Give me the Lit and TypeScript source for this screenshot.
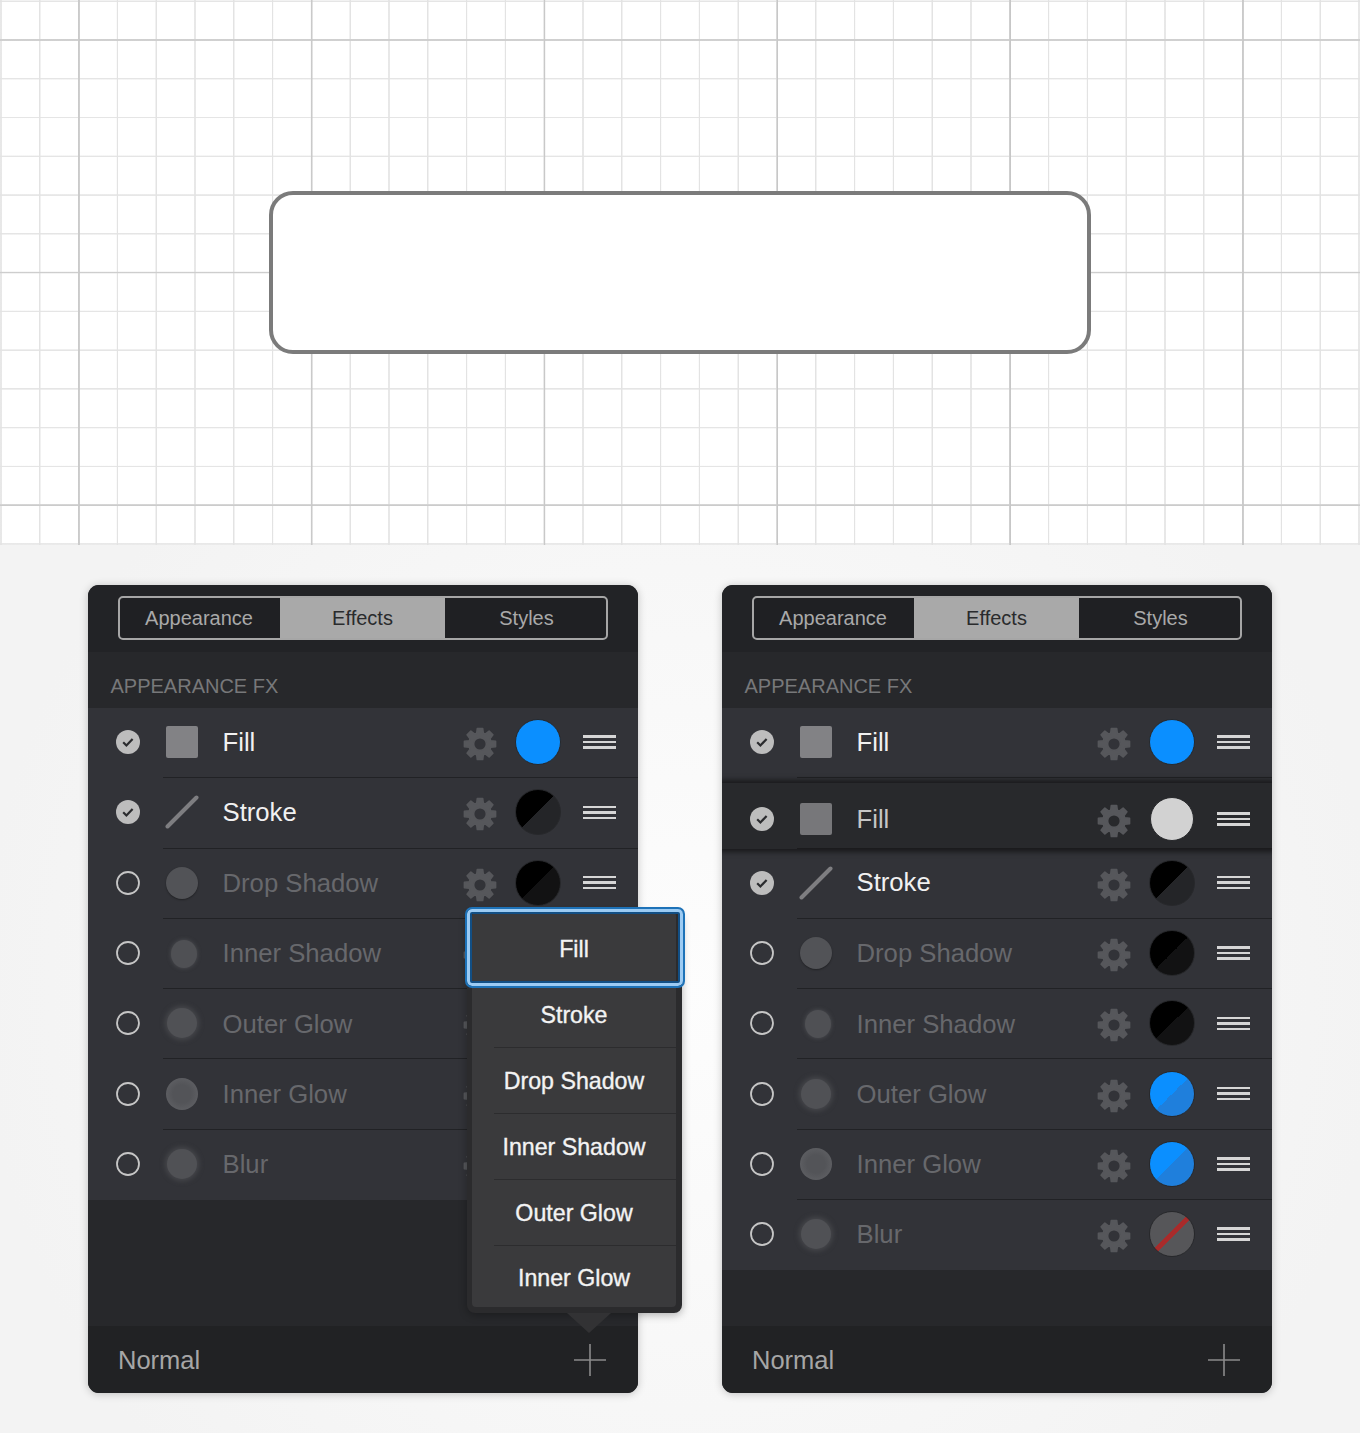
import { LitElement, html, css, svg } from 'lit';
import { customElement } from 'lit/decorators.js';

type Fx = { name: string; icon: string; on: boolean; swatch: string };

const LEFT_ROWS: Fx[] = [
  { name: 'Fill', icon: 'square', on: true, swatch: 'blue' },
  { name: 'Stroke', icon: 'line', on: true, swatch: 'half-a' },
  { name: 'Drop Shadow', icon: 'drop', on: false, swatch: 'half-b' },
  { name: 'Inner Shadow', icon: 'inner', on: false, swatch: 'half-b' },
  { name: 'Outer Glow', icon: 'outer', on: false, swatch: 'half-b' },
  { name: 'Inner Glow', icon: 'iglow', on: false, swatch: 'half-b' },
  { name: 'Blur', icon: 'blur', on: false, swatch: 'half-b' },
];

const RIGHT_ROWS: Fx[] = [
  { name: 'Fill', icon: 'square', on: true, swatch: 'blue' },
  { name: 'Stroke', icon: 'line', on: true, swatch: 'half-a' },
  { name: 'Drop Shadow', icon: 'drop', on: false, swatch: 'half-b' },
  { name: 'Inner Shadow', icon: 'inner', on: false, swatch: 'half-b' },
  { name: 'Outer Glow', icon: 'outer', on: false, swatch: 'half-blue' },
  { name: 'Inner Glow', icon: 'iglow', on: false, swatch: 'half-blue' },
  { name: 'Blur', icon: 'blur', on: false, swatch: 'none' },
];

const MENU = ['Stroke', 'Drop Shadow', 'Inner Shadow', 'Outer Glow', 'Inner Glow'];

// 8 toothed gear, built once
function gearPath() {
  const outer = 15.8, root = 11.2, hole = 6.4, c = 17;
  const pts: string[] = [];
  for (let i = 0; i < 8; i++) {
    const a = (i * Math.PI) / 4 - Math.PI / 2;
    const at = (r: number, d: number) =>
      `${(c + r * Math.cos(a + d)).toFixed(2)} ${(c + r * Math.sin(a + d)).toFixed(2)}`;
    pts.push(at(root, -0.3), at(outer, -0.17), at(outer, 0.17), at(root, 0.3));
  }
  const ring = `M${c - hole} ${c}a${hole} ${hole} 0 1 0 ${hole * 2} 0a${hole} ${hole} 0 1 0 ${-hole * 2} 0Z`;
  return `M${pts.join('L')}Z${ring}`;
}
const GEAR = gearPath();

@customElement('app-root')
export class AppRoot extends LitElement {
  static styles = css`
    :host {
      display: block;
      width: 1360px;
      height: 1433px;
      font-family: 'Liberation Sans', Arial, sans-serif;
      overflow: hidden;
    }

    /* Canvas */
    .canvas {
      height: 545px;
      box-sizing: border-box;
      display: flex;
      align-items: flex-start;
      justify-content: flex-start;
      padding: 191px 0 0 269px;
      background-color: #fff;
      background-image:
        repeating-linear-gradient(90deg, transparent 0, transparent 77.8px, #cbcbcb 78.4px, #c6c6c6 79.4px, transparent 80px, transparent 232.8px),
        repeating-linear-gradient(180deg, transparent 0, transparent 38.8px, #d0d0d0 39.4px, #cbcbcb 40.4px, transparent 41px, transparent 232.6px),
        repeating-linear-gradient(90deg, transparent 0, transparent 0px, #e3e3e3 0.6px, #e3e3e3 1.4px, transparent 2px, transparent 38.8px),
        repeating-linear-gradient(180deg, transparent 0, transparent 0.2px, #e5e5e5 0.8px, #e5e5e5 1.6px, transparent 2.2px, transparent 38.77px);
    }

    .shape {
      width: 822px;
      height: 163px;
      box-sizing: border-box;
      border: 4px solid #7b7b7b;
      border-radius: 24px;
      background: #fff;
    }

    /* Panels */
    .stage {
      height: 888px;
      box-sizing: border-box;
      padding: 40px 88px;
      display: flex;
      justify-content: space-between;
      background: radial-gradient(ellipse 700px 700px at 50% 50%, #fdfdfd 0%, #f3f3f3 100%);
    }

    .panel {
      position: relative;
      width: 550px;
      height: 808px;
      display: flex;
      flex-direction: column;
      border-radius: 11px;
      background: #27282b;
      box-shadow: 0 1px 8px rgba(0, 0, 0, 0.22);
    }

    .head {
      height: 67px;
      box-sizing: border-box;
      padding: 11px 30px 0;
      background: #222326;
      border-radius: 11px 11px 0 0;
    }

    .tabs {
      display: flex;
      height: 44px;
      width: 490px;
      box-sizing: border-box;
      border: 2px solid #a6a6a6;
      border-radius: 5px;
      background: #1f2023;
      overflow: hidden;
    }

    .tab {
      flex: 1;
      display: flex;
      align-items: center;
      justify-content: center;
      padding-left: 2px;
      font-size: 20px;
      color: #a9a9a9;
    }

    .tab.first {
      flex: none;
      width: 158px;
      padding: 0 2px 0 0;
    }

    .tab.sel {
      flex: none;
      width: 165px;
      padding: 0;
      background: #a9a9a9;
      color: #2a2b2d;
    }

    .title {
      height: 56px;
      box-sizing: border-box;
      padding: 22px 0 0 22.5px;
      font-size: 20px;
      line-height: 24px;
      color: #77787a;
    }

    .rows {
      background: #323338;
    }

    .row {
      position: relative;
      height: 70.3px;
      box-sizing: border-box;
      padding: 0 22px 2px 0;
      display: flex;
      align-items: center;
      background: linear-gradient(#212225, #212225) no-repeat 75px 100% / 100% 1px;
    }

    .row:last-child {
      background: none;
    }

    .row.ghost {
      position: absolute;
      left: 0;
      right: 0;
      top: 198px;
      height: 66px;
      padding: 6px 22px 0 0;
      background: linear-gradient(#1b1b1d, #1b1b1d) no-repeat 75px 100% / 100% 1px, #28292c;
      box-shadow: 0 0 5px 3px rgba(0, 0, 0, 0.5);
      clip-path: inset(-10px 0);
      z-index: 1;
    }

    .check {
      width: 24px;
      height: 24px;
      margin: 0 25px 0 28px;
      flex: none;
      display: block;
    }

    .ico {
      width: 34px;
      height: 34px;
      margin-right: 23.5px;
      flex: none;
      display: flex;
      align-items: center;
      justify-content: center;
    }

    .square {
      width: 32px;
      height: 32px;
      border-radius: 2px;
      background: #828285;
    }

    .ghost .square {
      background: #77777a;
    }

    .dot {
      width: 32px;
      height: 32px;
      border-radius: 50%;
      background: #525357;
    }

    .dot.drop {
      box-shadow: 0 1px 2px rgba(0, 0, 0, 0.35);
    }

    .dot.inner {
      width: 26px;
      height: 28px;
      margin: 2px 0 0 4px;
      background: #4f5054;
      box-shadow: 0 0 4px #4f5054;
    }

    .dot.outer,
    .dot.blur {
      width: 30px;
      height: 30px;
      background: #505155;
      box-shadow: 0 0 5px 2px #46474b;
    }

    .dot.iglow {
      background: radial-gradient(circle, #535458 40%, #65666a 100%);
    }

    .name {
      flex: 1;
      font-size: 25.7px;
      color: #f1f1f1;
    }

    .row.off .name {
      padding-top: 1.5px;
      color: #67686c;
    }

    .ghost .name {
      color: #c6c6c6;
    }

    .gear {
      width: 34px;
      height: 34px;
      flex: none;
      margin: 4px 18px 0 0;
      fill: #56575b;
      stroke: #56575b;
      stroke-width: 1.6;
      stroke-linejoin: round;
      fill-rule: evenodd;
    }

    .swatch {
      width: 46px;
      height: 46px;
      box-sizing: border-box;
      border-radius: 50%;
      flex: none;
      margin-right: 22px;
      border: 1px solid #27282b;
    }

    .swatch.blue {
      background: #0b8fff;
    }

    .swatch.half-a {
      background: linear-gradient(135deg, #000 50%, #242528 50%);
    }

    .swatch.half-b {
      background: linear-gradient(135deg, #000 50%, #121213 50%);
    }

    .swatch.half-blue {
      background: linear-gradient(135deg, #0b8fff 50%, #1f7fdc 50%);
    }

    .swatch.none {
      background: linear-gradient(135deg, #565659 46%, #a82b2b 46%, #a82b2b 54%, #565659 54%);
    }

    .swatch.light {
      width: 44px;
      height: 44px;
      margin: 0 23px 0 1px;
      background: #d2d2d2;
    }

    .grip {
      width: 33px;
      flex: none;
      display: flex;
      flex-direction: column;
      gap: 3px;
    }

    .grip span {
      height: 2.5px;
      background: #d6d6d6;
    }

    .spacer {
      flex: 1;
    }

    .foot {
      height: 67px;
      box-sizing: border-box;
      display: flex;
      align-items: center;
      justify-content: space-between;
      padding: 2px 32px 0 30px;
      background: #212224;
      border-radius: 0 0 11px 11px;
      font-size: 25.5px;
      color: #a6a6a6;
    }

    .plus {
      width: 32px;
      height: 32px;
      margin-top: -2px;
      stroke: #8b8b8b;
      stroke-width: 1.6;
    }

    /* Popup menu */
    .popup {
      position: absolute;
      left: 379px;
      top: 327px;
      width: 215px;
      box-sizing: border-box;
      padding: 0 6px 6px 5px;
      border-radius: 8px;
      background: #2b2b2d;
      box-shadow: 0 2px 8px rgba(0, 0, 0, 0.3);
      z-index: 2;
    }

    .popup::after {
      content: '';
      position: absolute;
      left: 100px;
      bottom: -20px;
      border-left: 22px solid transparent;
      border-right: 22px solid transparent;
      border-top: 20px solid #323234;
    }

    .list {
      background: #3a3a3c;
      border-radius: 4px;
    }

    .item {
      height: 66px;
      display: flex;
      align-items: center;
      justify-content: center;
      font-size: 23.2px;
      color: #f3f3f3;
      -webkit-text-stroke: 0.35px #f3f3f3;
      background: linear-gradient(#2c2c2e, #2c2c2e) no-repeat 22px 100% / 100% 1px;
    }

    .item:last-child {
      height: 61px;
      padding-top: 3px;
      box-sizing: border-box;
      background: none;
    }

    .item.active {
      position: relative;
      height: 70px;
      padding-top: 4px;
      box-sizing: border-box;
      background: none;
    }

    .ring {
      position: absolute;
      left: -7px;
      top: -5px;
      width: 220px;
      height: 81px;
      box-sizing: border-box;
      border: 2px solid #1d72b8;
      border-radius: 7px;
      box-shadow: inset 0 0 0 3px #9ccbf3, inset 0 0 0 5px #124f85;
      z-index: 0;
    }

    .item.active b {
      position: relative;
      font-weight: normal;
    }
  `;

  private renderIcon(kind: string) {
    if (kind === 'square') return html`<div class="square"></div>`;
    if (kind === 'line') {
      return html`<svg width="34" height="34" viewBox="0 0 34 34" fill="none" stroke="#7e7e81" stroke-width="4" stroke-linecap="round">
        <line x1="2.5" y1="31.5" x2="31.5" y2="2.5"></line>
      </svg>`;
    }
    return html`<div class="dot ${kind}"></div>`;
  }

  private renderCheck(on: boolean) {
    if (!on) {
      return html`<svg class="check" viewBox="0 0 24 24"><circle cx="12" cy="12" r="11" fill="none" stroke="#c6c6c6" stroke-width="1.8"></circle></svg>`;
    }
    return html`<svg class="check" viewBox="0 0 24 24">
      <circle cx="12" cy="12" r="12" fill="#bdbdbd"></circle>
      <path d="M7.2 12.3l3.2 3.2L16.6 8.9" fill="none" stroke="#2a2b2e" stroke-width="2.2"></path>
    </svg>`;
  }

  private renderRow(r: Fx, extra = '', swatch = r.swatch) {
    return html`<div class="row ${r.on ? '' : 'off'} ${extra}">
      ${this.renderCheck(r.on)}
      <div class="ico">${this.renderIcon(r.icon)}</div>
      <div class="name">${r.name}</div>
      <svg class="gear" viewBox="0 0 34 34">${svg`<path d=${GEAR}></path>`}</svg>
      <div class="swatch ${swatch}"></div>
      <div class="grip"><span></span><span></span><span></span></div>
    </div>`;
  }

  private renderPanel(rows: Fx[], ghost: boolean, popup: boolean) {
    const first = rows[0];
    const rest = rows.slice(1);
    return html`<div class="panel">
      <div class="head">
        <div class="tabs">
          <div class="tab first">Appearance</div>
          <div class="tab sel">Effects</div>
          <div class="tab">Styles</div>
        </div>
      </div>
      <div class="title">APPEARANCE FX</div>
      <div class="rows">
        ${this.renderRow(first)}
        ${ghost ? html`<div class="row"></div>${this.renderRow(first, 'ghost', 'light')}` : ''}
        ${rest.map((r) => this.renderRow(r))}
      </div>
      <div class="spacer"></div>
      <div class="foot">
        <span>Normal</span>
        <svg class="plus" viewBox="0 0 32 32"><path d="M16 0V32M0 16H32"></path></svg>
      </div>
      ${popup
        ? html`<div class="popup">
            <div class="list">
              <div class="item active"><div class="ring"></div><b>Fill</b></div>
              ${MENU.map((m) => html`<div class="item">${m}</div>`)}
            </div>
          </div>`
        : ''}
    </div>`;
  }

  render() {
    return html`
      <div class="canvas"><div class="shape"></div></div>
      <div class="stage">
        ${this.renderPanel(LEFT_ROWS, false, true)}
        ${this.renderPanel(RIGHT_ROWS, true, false)}
      </div>
    `;
  }
}

declare global {
  interface HTMLElementTagNameMap {
    'app-root': AppRoot;
  }
}
